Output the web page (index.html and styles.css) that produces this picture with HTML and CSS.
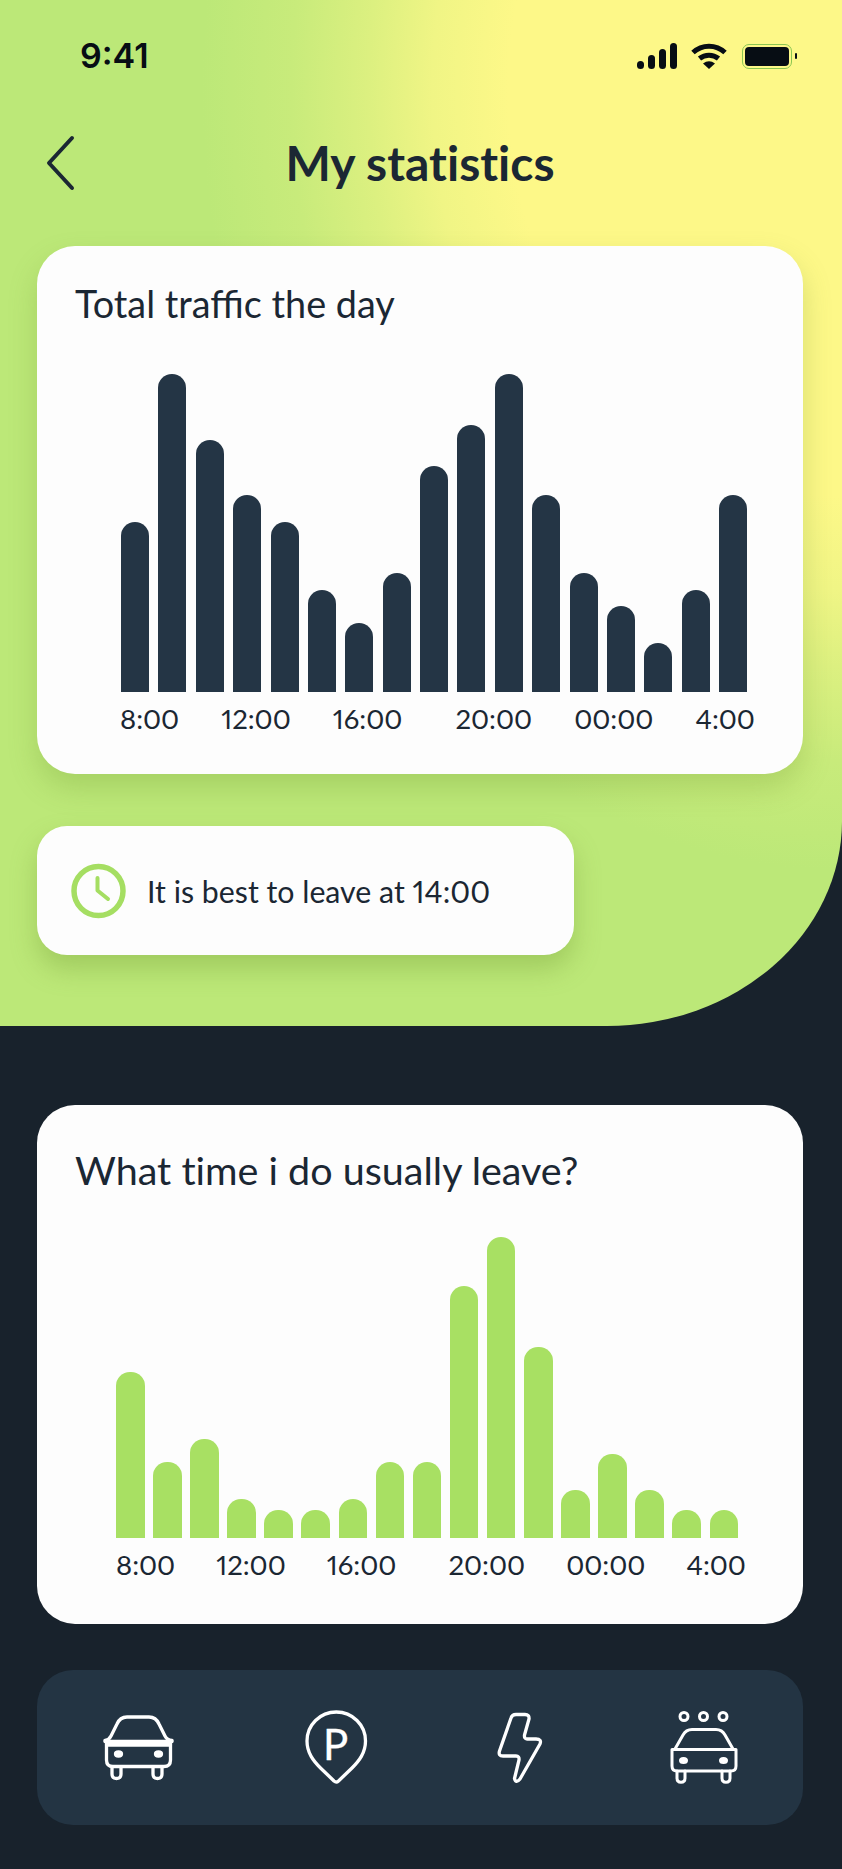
FILE: index.html
```html
<!DOCTYPE html>
<html lang="en">
<head>
  <meta charset="UTF-8" />
  <meta name="viewport" content="width=device-width, initial-scale=1.0"/>
  <title>My statistics</title>
  <link rel="stylesheet" href="styles.css">
</head>
<body>
  <div class="top">
    <div class="status-bar">
      <span class="clock-time">9:41</span>
      <div class="status-icons">
        <div class="signal">
          <i style="height: 8px"></i>
          <i style="height: 14px"></i>
          <i style="height: 20px"></i>
          <i style="height: 26px"></i>
        </div>
        <svg class="wifi" width="36" height="26" viewBox="0 0 36 26" fill="none" stroke="#070d14" stroke-width="5">
          <path d="M2 9.5C11 1 25 1 34 9.5"/>
          <path d="M8.5 15.5C14 11 22 11 27.5 15.5"/>
          <path d="M12 20.5Q18 16 24 20.5L18 26Z" fill="#070d14" stroke="none"/>
        </svg>
        <div class="battery"><div class="battery-fill"></div></div>
        <div class="battery-nub"></div>
      </div>
    </div>

    <div class="header">
      <svg class="back" width="30" height="56" viewBox="0 0 30 56" fill="none" stroke="#1b2733" stroke-width="4" stroke-linecap="round" stroke-linejoin="round">
        <path d="M26 3L3 28L26 53" />
      </svg>
      <h1>My statistics</h1>
    </div>

    <div class="card card-traffic">
      <h2>Total traffic the day</h2>
      <div class="bars bars-dark">
        <div class="bar" style="height: 170px"></div>
        <div class="bar" style="height: 318px"></div>
        <div class="bar" style="height: 252px"></div>
        <div class="bar" style="height: 197px"></div>
        <div class="bar" style="height: 170px"></div>
        <div class="bar" style="height: 102px"></div>
        <div class="bar" style="height: 69px"></div>
        <div class="bar" style="height: 119px"></div>
        <div class="bar" style="height: 226px"></div>
        <div class="bar" style="height: 267px"></div>
        <div class="bar" style="height: 318px"></div>
        <div class="bar" style="height: 197px"></div>
        <div class="bar" style="height: 119px"></div>
        <div class="bar" style="height: 86px"></div>
        <div class="bar" style="height: 49px"></div>
        <div class="bar" style="height: 102px"></div>
        <div class="bar" style="height: 197px"></div>
      </div>
      <div class="labels">
        <span>8:00</span><span>12:00</span><span>16:00</span><span>20:00</span><span>00:00</span><span>4:00</span>
      </div>
    </div>

    <div class="tip">
      <svg width="56" height="56" viewBox="0 0 56 56" fill="none" stroke="#a5de62" stroke-linecap="round" stroke-linejoin="round">
        <circle cx="27.5" cy="28" r="24.5" stroke-width="5.5"/>
        <path d="M26.5 15V27.5L37 36" stroke-width="4"/>
      </svg>
      <span>It is best to leave at 14:00</span>
    </div>
  </div>

  <div class="card card-leave">
    <h2>What time i do usually leave?</h2>
    <div class="bars bars-green">
      <div class="bar" style="height: 166px"></div>
      <div class="bar" style="height: 76px"></div>
      <div class="bar" style="height: 99px"></div>
      <div class="bar" style="height: 39px"></div>
      <div class="bar" style="height: 28px"></div>
      <div class="bar" style="height: 28px"></div>
      <div class="bar" style="height: 39px"></div>
      <div class="bar" style="height: 76px"></div>
      <div class="bar" style="height: 76px"></div>
      <div class="bar" style="height: 252px"></div>
      <div class="bar" style="height: 301px"></div>
      <div class="bar" style="height: 191px"></div>
      <div class="bar" style="height: 48px"></div>
      <div class="bar" style="height: 84px"></div>
      <div class="bar" style="height: 48px"></div>
      <div class="bar" style="height: 28px"></div>
      <div class="bar" style="height: 28px"></div>
    </div>
    <div class="labels">
      <span>8:00</span><span>12:00</span><span>16:00</span><span>20:00</span><span>00:00</span><span>4:00</span>
    </div>
  </div>

  <div class="nav">
    <svg class="nav-car" width="72" height="68" viewBox="0 0 72 68" fill="none" stroke="#fff" stroke-width="3.3" stroke-linecap="round" stroke-linejoin="round">
      <path d="M2 26.5Q6 26 8 22L14 10Q17 3 24 3H46Q53 3 56 10L62 22Q64 26 69 26.5"/>
      <path d="M2 27.5H69M3.5 31H67.5"/>
      <path d="M3.5 28V46Q3.5 52.5 10 52.5H61Q67.5 52.5 67.5 46V28"/>
      <path d="M9 53V60Q9 64.5 13.5 64.5Q18 64.5 18 60V53M50 53V60Q50 64.5 54.5 64.5Q59 64.5 59 60V53"/>
      <ellipse cx="15.5" cy="40" rx="3" ry="2" fill="#fff"/>
      <ellipse cx="55.5" cy="40" rx="3" ry="2" fill="#fff"/>
    </svg>
    <svg class="nav-pin" width="64" height="76" viewBox="0 0 64 76" fill="none" stroke="#fff" stroke-width="3.3" stroke-linejoin="round">
      <path d="M31.3 2C47.5 2 60.5 15 60.5 31C60.5 43 54 51 47 58L33.5 71Q31.3 73 29 71L15.5 58C8.5 51 2 43 2 31C2 15 15 2 31.3 2Z"/>
      <text class="pin-letter" x="18" y="50">P</text>
    </svg>
    <svg class="nav-bolt" width="50" height="76" viewBox="0 0 50 76" fill="none" stroke="#fff" stroke-width="3.3" stroke-linejoin="round">
      <path d="M17 8Q18 4.5 22 4.5H31Q35.5 4.5 35 9L30.5 25Q30 29 33 29H42Q48 29 46 34L26 69Q22 74 20.5 68.5L25 50Q25.5 46 22 46H9Q4 46 5.5 41Z"/>
    </svg>
    <svg class="nav-wash" width="70" height="75" viewBox="0 0 70 75" fill="none" stroke="#fff" stroke-width="3" stroke-linecap="round" stroke-linejoin="round">
      <circle cx="15" cy="6.5" r="4"/>
      <circle cx="34.5" cy="6.5" r="4"/>
      <circle cx="54" cy="6.5" r="4"/>
      <path d="M6 39L14 25Q17 19.5 23 19.5H47Q53 19.5 56 25L64 39"/>
      <path d="M3 39.5H67V56Q67 61 62 61H8Q3 61 3 56Z"/>
      <path d="M8 61V68Q8 72.3 12 72.3Q16 72.3 16 68V61M53 61V68Q53 72.3 57 72.3Q61 72.3 61 68V61"/>
      <ellipse cx="14.5" cy="50.5" rx="3" ry="2" fill="#fff"/>
      <ellipse cx="54.5" cy="50.5" rx="3" ry="2" fill="#fff"/>
    </svg>
  </div>
</body>
</html>
```

FILE: styles.css
```css
* { box-sizing: border-box; }

body {
  margin: 0;
  height: 100vh;
  overflow: hidden;
  font-family: 'Lato', 'Noto Sans', sans-serif;
  font-variant-numeric: proportional-nums;
  background: #18222c;
  color: #1b2733;
}

.top {
  height: 1026px;
  padding: 41px 39px 0 37px;
  background: radial-gradient(ellipse 640px 780px at 100% 90px, #fdf888 52%, #f0f585 64%, #dcf080 74%, #c8eb7b 86%, #bce878 100%);
  border-bottom-right-radius: 235px 205px;
}

.status-bar {
  display: flex;
  justify-content: space-between;
  align-items: center;
  height: 28px;
  padding: 0 6px 0 43px;
}

.clock-time {
  font-family: 'Inter', sans-serif;
  font-weight: 600;
  font-size: 34px;
  color: #070d14;
}

.status-icons {
  display: flex;
  align-items: center;
  margin-top: 2px;
}

.signal {
  display: flex;
  align-items: flex-end;
  gap: 3.5px;
  height: 26px;
  margin-right: 14px;
}

.signal i {
  display: block;
  width: 7.5px;
  background: #070d14;
  border-radius: 4px;
}

.battery {
  width: 50px;
  height: 25px;
  margin-left: 15px;
  padding: 2px;
  border: 1.5px solid #8bc653;
  border-radius: 7px;
}

.battery-fill {
  height: 100%;
  background: #070d14;
  border-radius: 4px;
}

.battery-nub {
  width: 2px;
  height: 6px;
  margin-left: 3px;
  background: #070d14;
  border-radius: 1px;
}

.header {
  display: grid;
  grid-template-columns: 1fr auto 1fr;
  align-items: center;
  margin-top: 63px;
  height: 60px;
}

.back {
  grid-column: 1;
  grid-row: 1;
  margin: 2px 0 0 9px;
}

h1 {
  grid-column: 2;
  grid-row: 1;
  margin: 0;
  font-size: 48px;
  font-weight: 700;
  font-variant-ligatures: none;
}

h2 {
  margin: 0;
  font-size: 37.8px;
  font-weight: 400;
  line-height: 44px;
}

.card {
  background: #fdfdfd;
  border-radius: 38px;
}

.card-traffic {
  height: 528px;
  margin-top: 54px;
  padding: 36px 50px 0 38px;
  box-shadow: 0 14px 28px rgba(110, 150, 50, 0.28);
}

.card-leave {
  width: 766px;
  height: 519px;
  margin: 79px 0 0 37px;
  padding: 43px 57px 0 38px;
}

.card-leave h2 {
  font-size: 39.5px;
  font-variant-ligatures: none;
}

.bars {
  display: flex;
  justify-content: space-between;
  align-items: flex-end;
}

.bar {
  width: 28px;
  border-radius: 14px 14px 0 0;
}

.bars-dark {
  height: 320px;
  margin: 46px 6px 0 46px;
}

.bars-dark .bar { background: #243545; }

.bars-green {
  height: 305px;
  margin: 41px 8px 0 41px;
}

.bars-green .bar {
  width: 28.5px;
  background: #a8e063;
}

.labels {
  display: flex;
  justify-content: space-between;
  margin-top: 9px;
  font-size: 27.5px;
  line-height: 36px;
}

.labels span:nth-child(4) { margin-left: 11px; }

.card-traffic .labels { margin: 9px -2px 0 45px; }
.card-leave .labels { margin-left: 41px; }

.tip {
  display: flex;
  align-items: center;
  gap: 20px;
  width: 537px;
  height: 129px;
  margin-top: 52px;
  padding-left: 34px;
  background: #fdfdfd;
  border-radius: 30px;
  font-size: 30.3px;
  box-shadow: 0 14px 26px rgba(110, 150, 50, 0.35);
}

.nav {
  display: flex;
  align-items: center;
  gap: 125px;
  width: 766px;
  height: 155px;
  margin: 46px 0 0 37px;
  padding-left: 66px;
  background: #233443;
  border-radius: 36px;
}

.nav-pin { margin-left: 5px; }

.pin-letter {
  fill: #fff;
  stroke: #fff;
  stroke-width: 0.3;
  font-family: 'Lato', sans-serif;
  font-size: 42px;
}
```
